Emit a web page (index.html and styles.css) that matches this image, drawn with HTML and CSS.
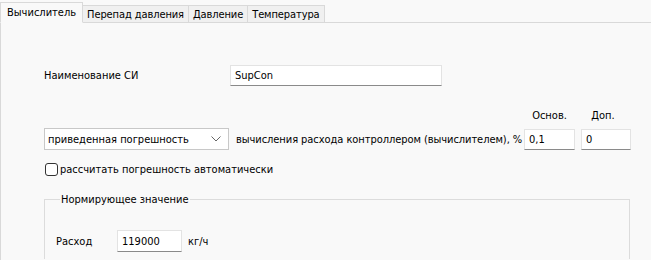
FILE: index.html
```html
<!DOCTYPE html>
<html lang="ru">
<head>
  <meta charset="UTF-8" />
  <title>Вычислитель</title>
  <link rel="stylesheet" href="styles.css">
</head>
<body>

  <!-- Tab strip -->
  <div class="tabs">
    <div class="tab active">Вычислитель</div>
    <div class="tab">Перепад давления</div>
    <div class="tab">Давление</div>
    <div class="tab">Температура</div>
  </div>

  <!-- Tab page -->
  <div class="panel">

    <div class="row name-row">
      <label class="name-label" for="siName">Наименование СИ</label>
      <input type="text" id="siName" class="field name-field" value="SupCon">
    </div>

    <div class="row error-row">
      <div class="select">
        <span>приведенная погрешность</span>
        <svg width="10" height="6" viewBox="0 0 10 6"><path d="M0.5 0.5 L5 5 L9.5 0.5" fill="none" stroke="#666" stroke-width="1"/></svg>
      </div>
      <span class="error-text">вычисления расхода контроллером (вычислителем), %</span>
      <div class="col">
        <span class="col-label">Основ.</span>
        <input type="text" class="field small-field" value="0,1">
      </div>
      <div class="col">
        <span class="col-label">Доп.</span>
        <input type="text" class="field small-field second" value="0">
      </div>
    </div>

    <label class="check-row">
      <span class="check"></span>
      рассчитать погрешность автоматически
    </label>

    <!-- Group box (cut off by the window bottom) -->
    <fieldset class="group">
      <legend>Нормирующее значение</legend>
      <div class="row flow-row">
        <span class="flow-label">Расход</span>
        <input type="text" class="field flow-field" value="119000">
        <span class="unit">кг/ч</span>
      </div>
    </fieldset>

  </div>

</body>
</html>
```

FILE: styles.css
```css
/* Page base */
body {
  margin: 0;
  height: 260px;
  overflow: hidden;
  background: #f9f9f9;
  font-family: "DejaVu Sans Condensed", "DejaVu Sans", sans-serif;
  font-size: 11px;
  color: #000;
}

/* Tabs */
.tabs {
  display: flex;
  align-items: flex-end;
  height: 23px;
  border-bottom: 1px solid #d9d9d9;
  box-sizing: border-box;
  padding-top: 2px;
}

.tab {
  height: 18px;
  line-height: 17px;
  padding: 0 4px;
  margin-bottom: -1px;
  background: #f0f0f0;
  border: 1px solid #d9d9d9;
  border-left: none;
  box-sizing: border-box;
  white-space: nowrap;
  letter-spacing: -0.1px;
}

.tab.active {
  height: 21px;
  line-height: 20px;
  padding: 0 6px;
  background: #f9f9f9;
  border-left: 1px solid #d9d9d9;
  border-bottom-color: #f9f9f9;
  letter-spacing: 0;
}

/* Tab page */
.panel {
  border-left: 1px solid #d9d9d9;
  height: 237px;
  padding-left: 43px;
  box-sizing: border-box;
  overflow: hidden;
}

.row {
  display: flex;
  align-items: center;
  white-space: nowrap;
}

/* Input fields */
.field {
  height: 21px;
  box-sizing: border-box;
  border: 1px solid #e3e3e3;
  border-bottom-color: #8a8a8a;
  background: #fff;
  font-family: inherit;
  font-size: 11px;
  padding: 0 4px;
  margin: 0;
  outline: none;
}

.name-row {
  padding-top: 42px;
}

.name-label {
  width: 186px;
}

.name-field {
  width: 212px;
}

.error-row {
  align-items: flex-end;
  margin-top: 23px;
}

.select {
  width: 185px;
  height: 22px;
  box-sizing: border-box;
  border: 1px solid #c8c8c8;
  background: #fff;
  display: flex;
  align-items: center;
  justify-content: space-between;
  padding: 0 7px 0 3px;
}

.error-text {
  margin-left: 7px;
  line-height: 21px;
  width: 288px;
  letter-spacing: -0.06px;
}

.col {
  display: flex;
  flex-direction: column;
  align-items: center;
}

.col-label {
  margin-bottom: 7px;
}

.small-field {
  width: 51px;
}

.small-field.second {
  width: 50px;
  margin-left: 6px;
}

/* Checkbox */
.check-row {
  display: flex;
  align-items: center;
  margin-top: 13px;
  margin-left: 1px;
  white-space: nowrap;
}

.check {
  width: 13px;
  height: 13px;
  box-sizing: border-box;
  border: 1px solid #333;
  border-radius: 3px;
  background: #fff;
  margin-right: 2px;
}

/* Group box */
.group {
  margin: 17px 0 0 0;
  width: 586px;
  height: 66px;
  box-sizing: border-box;
  border: 1px solid #dcdcdc;
  border-bottom: none;
  padding: 24px 0 0 11px;
}

.group legend {
  padding: 0 1px;
  margin-left: 4px;
}

.flow-label {
  width: 61px;
}

.flow-field {
  width: 65px;
  height: 22px;
}

.unit {
  margin-left: 6px;
}
```
